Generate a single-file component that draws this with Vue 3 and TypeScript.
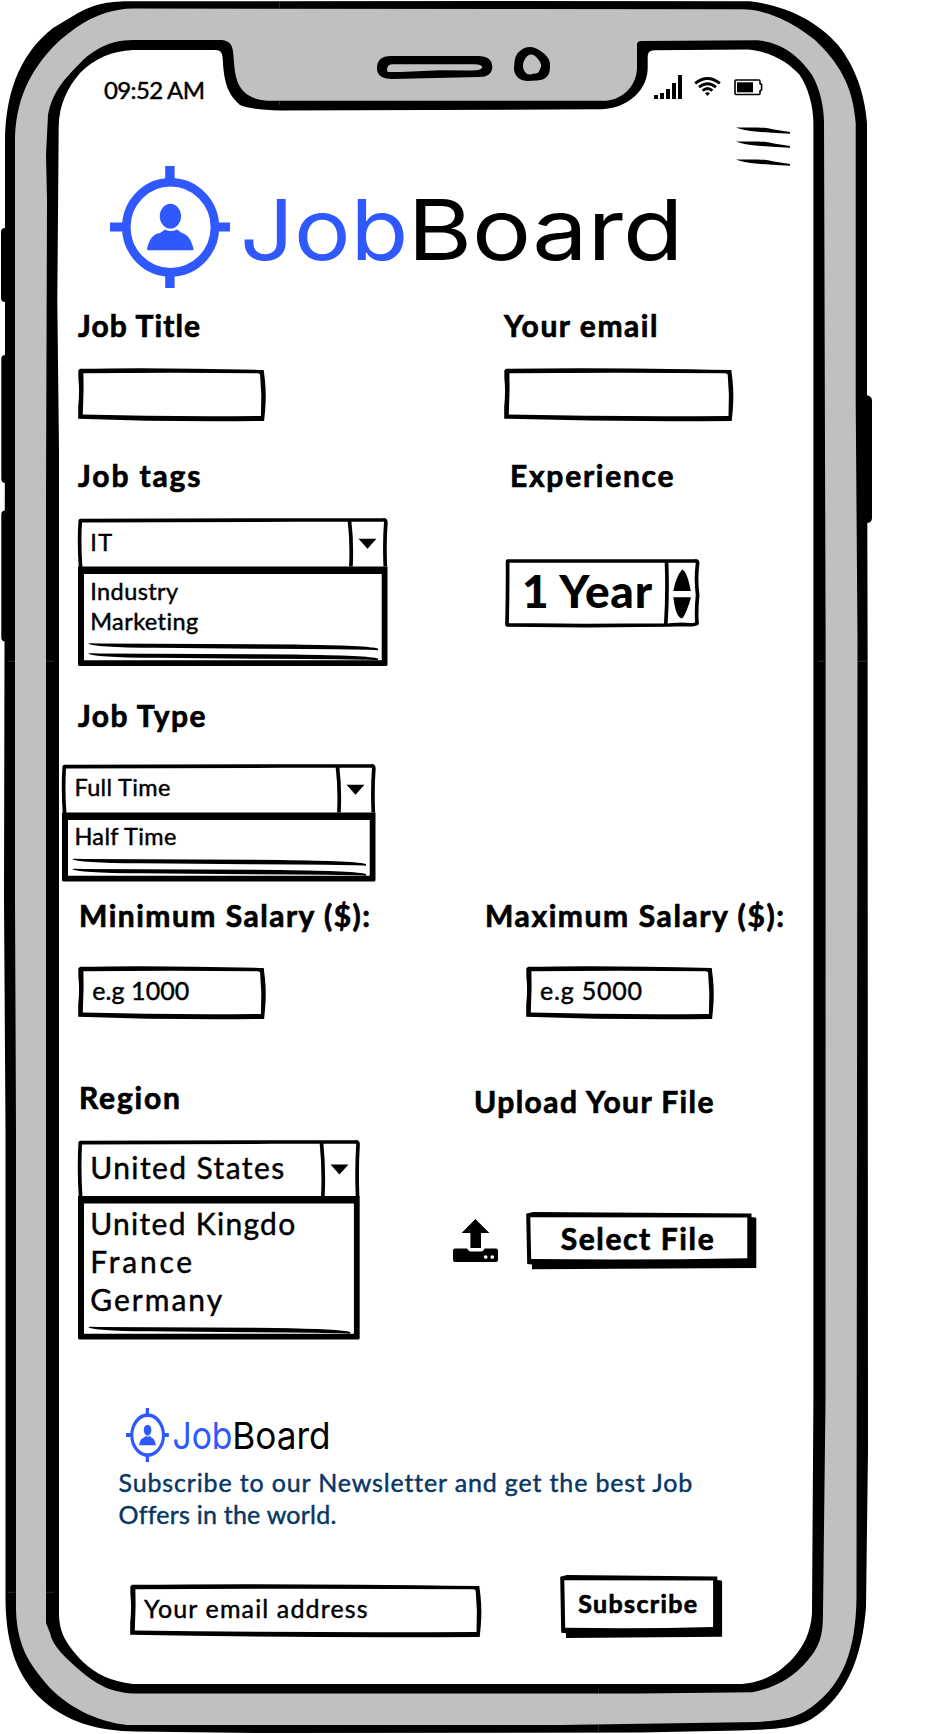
<script setup lang="ts">
import type { Directive } from 'vue'

type Line = [text: string, width: number]

interface SelectSpec {
  width: number
  height: number
  head: number
  divider: number
  value: Line
  options: Line[]
  rules: number[]
}

interface LeftItem {
  id: string
  label: Line
  select?: SelectSpec
  entry?: Line
}

// Tracks a line of text out (or in) so that it spans the given width.
const vSpan: Directive<HTMLElement, number> = {
  mounted(el, { value }) {
    const count = (el.textContent ?? '').length
    const natural = el.getBoundingClientRect().width
    if (count > 1) el.style.letterSpacing = `${((value - natural) / (count - 1)).toFixed(3)}px`
  },
}

const leftItems: LeftItem[] = [
  { id: 'title', label: ['Job Title', 122] },
  {
    id: 'tags',
    label: ['Job tags', 122.5],
    select: {
      width: 309.5, height: 148, head: 48.5, divider: 271.5,
      value: ['IT', 22], options: [['Industry', 88], ['Marketing', 108.5]], rules: [126, 136],
    },
  },
  {
    id: 'type',
    label: ['Job Type', 127.5],
    select: {
      width: 313.5, height: 117.5, head: 48.5, divider: 275.5,
      value: ['Full Time', 96], options: [['Half Time', 102]], rules: [95.5, 105.5],
    },
  },
  { id: 'minimum', label: ['Minimum Salary ($):', 291], entry: ['e.g 1000', 97] },
  {
    id: 'region',
    label: ['Region', 101],
    select: {
      width: 281.7, height: 199.5, head: 56, divider: 243.5,
      value: ['United States', 194],
      options: [['United Kingdo', 205], ['France', 102], ['Germany', 132]], rules: [187.5],
    },
  },
]

function inputFrame(w: number, h: number): string {
  return `M2 .8Q${w * 0.4} -1 ${w - 2} 2L${w - 0.8} ${h * 0.22}Q${w + 0.8} ${h * 0.5} ${w - 0.6} ${h * 0.8}L${w - 1.6} ${h - 0.4}`
    + `Q${w * 0.5} ${h + 0.8} .2 ${h - 2.6}L.2 ${h * 0.72}Q1.8 ${h * 0.45} .4 ${h * 0.2}L.3 2.4Z`
    + `M5.4 5.2L5.6 ${h * 0.4}L4.8 ${h - 6.8}Q${w * 0.5} ${h - 4.4} ${w - 4.8} ${h - 5.4}L${w - 4.4} ${h * 0.5}L${w - 5.6} 6.4L${w - 7.4} 5.2Q${w * 0.5} 4.1 5.4 5.2Z`
}

function buttonFrame(w: number, h: number): string {
  return `M.2 1.7L7 0L${w - 5} 1.5V5L${w - 0.2} 5.7V${h - 1.2}L6 ${h}V${h - 4.8}L1.2 ${h - 5.2}Z`
    + `M4.3 5.2L5.2 ${h - 10.2}Q${w * 0.5} ${h - 9} ${w - 9.2} ${h - 11}V5.6Z`
}

function selectHead({ width: w, head: h, divider: d }: SelectSpec): string {
  return `M2.6 ${h + 1}Q.8 ${h * 0.5} 2.3 2.6L${d * 0.8} 2L${w - 4} 1.8Q${w - 1.4} 1.6 ${w - 1.7} 5Q${w - 3.2} ${h * 0.5} ${w - 2.2} ${h}`
    + `M${d} 3Q${d + 2.6} ${h * 0.5} ${d + 1.4} ${h}`
}

function selectList({ width: w, height: h, head: t }: SelectSpec): string {
  return `M0 ${t}H${w}V${h - 1}L${w - 1} ${h}H1L0 ${h - 1}ZM6 ${t + 7.6}V${h - 5.8}H${w - 5.8}V${t + 7.6}Z`
}

function caret({ divider: d, head: h }: SelectSpec): string {
  return `M${d + 9} ${h / 2 - 3.4}h18l-9 9.8z`
}

function rule(w: number, y: number): string {
  return `M10 ${y - 0.6}Q12 ${y - 0.8} 22 ${y - 0.5}L${w * 0.7} ${y + 0.4}Q${w - 18} ${y + 1.5} ${w - 9.5} ${y + 4.4}V${y + 6.2}Q${w - 34} ${y + 5} ${w * 0.6} ${y + 4.8}L${w * 0.25} ${y + 3.8}Q15 ${y + 3.2} 10 ${y - 0.6}Z`
}
</script>

<template>
  <main class="page">
    <svg class="phone" width="950" height="1734" viewBox="0 0 950 1734" aria-hidden="true">
      <rect x="1" y="228" width="12" height="74" rx="4" />
      <rect x="1.3" y="355" width="12" height="128" rx="4" />
      <rect x="1.3" y="510.5" width="12" height="131" rx="4" />
      <rect x="858" y="395.6" width="14" height="127.5" rx="5" />
      <path d="M125 1.3C102 2 92 6 78 13L53 28C25 50 5 85 5 143V400L4 900L5.5 1130V1600C6 1650 20 1677 38 1696C65 1723 100 1731 135 1731.5L260 1733L640 1732.5L740 1730.5C780 1729 797 1728 813 1718C845 1697 862 1660 866 1607L868 1450L867.6 640L867 400V123C864 85 850 60 838 45C818 22 788 6 750 1.3L500 1Z" />
      <path class="metal" d="M133 8.6C95 9 70 32 57 43C30 70 15 100 15 143V400L15 900L16 1130V1610C17 1650 33 1668 50 1688C72 1710 100 1722 127 1725L560 1725L758 1722C784 1720 797 1718 813 1706C842 1684 856 1652 856.5 1597L857.5 640L855.7 400V123C853 85 838 62 815 40C790 20 765 9.5 742 9.3Z" />
      <path d="M133 40H222C230 41 233 45 233.5 56C235 75 235 98 267 100.7H606C625 99 637 84 637 67V44Q637.5 41 641 41L758 40.2C785 43 802 60 812 75C820 88 824 108 824 123L825.6 640L825.5 1400L823 1613C823 1637 819 1647 808 1660C794 1677 775 1688 752 1692.3L640 1693.5H133C110 1692 98 1685 83 1673C65 1658 52 1645 50 1633L46 1623V500L47 200L46 155L48 115C53 90 64 80 83 60C95 49 110 42 124 40.6Z" />
      <path class="glass" d="M133 50H215C221 50 222.6 53 222.8 60C224 85 229 95 240 105Q252 110 280 110.5L602 109.3C628 108 647.7 90 647.7 68V56Q648 50.6 654 50.3L748 49.6C775 52 790 65 799 74C809 88 813.4 108 813.4 123V1400L812 1613C811 1632 803 1647 794 1657C778 1675 762 1682 742 1684H133C110 1681 96 1674 83 1662C67 1645 59 1634 59 1613V450L57.3 300L58.7 127C59 104 68 87 80 73C95 58 112 51 133 50Z" />
      <path d="M391 56H478Q492 56 492.3 67Q492 77 479 77L392 79Q377 79 377 68Q377 56 391 56Z" />
      <path class="metal" d="M392 64.3H474Q482 64.5 482.3 67.3Q481 70.5 472 70.5L440 70.2L400 72H388.5Q387 72 387 70Q387 64.5 392 64.3Z" />
      <path d="M530 47Q535 47 542 52Q551 58 550 67Q550 80 537 80.4L527 81Q515 80 514 69Q514 54 520 51Q524 47 530 47Z" />
      <path class="metal" d="M530 54.6Q534 54 538 59Q543 65 540 69Q539 74 534 73.6Q528 76 525 72Q522 68 523.5 62Q526 56 530 54.6Z" />
      <path class="seam" d="M8 661.3H15M46 661.3H54M818 661.3H826M858 661.3H866M8 1592.3H15M46 1592.3H54M279.5 1V8M279.5 101V105M598.5 1689V1693M598.5 1725V1733" />
    </svg>

    <div class="screen">
      <header class="status">
        <span v-span="101" class="copy time">09:52 AM</span>
        <div class="indicators">
          <svg width="28" height="24" viewBox="0 0 28 24"><path d="M0 20h4v4H0zM6 18h4v6H6zM12 14h4v10h-4zM18 8h4v16h-4zM24 0h4v24h-4z" /></svg>
          <svg width="27" height="19" viewBox="0 0 27 19">
            <g class="waves"><path d="M1.2 6.4Q13.5 -3.6 25.8 6.4" /><path d="M5 10.2Q13.5 3.2 22 10.2" /><path d="M8.7 13.6Q13.5 9.4 18.3 13.6" /></g>
            <path d="M11 16.2Q13.5 14.4 16 16.2L13.5 19Z" />
          </svg>
          <svg width="29" height="17" viewBox="0 0 29 17">
            <path class="cell" d="M2 1H25Q26 1 26 2.5V4.5L27.6 5.5V10.8L26 12V14.5Q26 15.5 25 15.5H2Q1 15.5 1 14.5V2Q1 1 2 1Z" /><rect x="3" y="3.3" width="16" height="10" />
          </svg>
        </div>
      </header>

      <button class="menu" aria-label="Menu">
        <svg width="54" height="40" viewBox="0 0 54 40">
          <path v-for="y in [0, 14, 32]" :key="y" :transform="`translate(0 ${y})`" d="M0 .6L22 .4Q30 .6 38 2.4L54 5V6.8L40 6L22 4.8Q6 3.4 0 .6Z" />
        </svg>
      </button>

      <svg class="logo" width="566" height="122" viewBox="0 0 566 122" role="img" aria-label="JobBoard">
        <defs>
          <g id="brand">
            <g class="blue">
              <path d="M55.2 0h9.4v16h-9.4zM55.2 106h9.4v16h-9.4zM0 56.5h16v9H0zM104 56.5h16v9h-16z" />
              <ellipse class="ring" cx="60.6" cy="61.3" rx="44.3" ry="45" />
              <ellipse cx="60.4" cy="50.2" rx="10.6" ry="12.4" />
              <path d="M37 83.5C39 73 43 68 50 67L55 63.4Q60.5 66.5 67 63.4L72 67C78 69 81 73 83.7 83.5Q83.5 84.3 82 84.3H39Q37 84.3 37 83.5Z" />
              <text x="130" y="93.7" textLength="168.5" lengthAdjust="spacingAndGlyphs">Job</text>
            </g>
            <text x="297.5" y="93.7" textLength="276" lengthAdjust="spacingAndGlyphs">Board</text>
          </g>
        </defs>
        <use href="#brand" />
      </svg>

      <div class="form">
        <div class="column left">
          <div v-for="item in leftItems" :key="item.id" class="item" :class="item.id">
            <label><span v-span="item.label[1]" class="heading">{{ item.label[0] }}</span></label>
            <div v-if="item.select" class="select">
              <svg :width="item.select.width" :height="item.select.height">
                <path class="pen" :d="selectHead(item.select)" />
                <path fill-rule="evenodd" :d="selectList(item.select)" />
                <path :d="caret(item.select)" />
                <path v-for="y in item.select.rules" :key="y" :d="rule(item.select.width, y)" />
              </svg>
              <div class="value"><span v-span="item.select.value[1]" class="copy">{{ item.select.value[0] }}</span></div>
              <div v-for="o in item.select.options" :key="o[0]" class="option"><span v-span="o[1]" class="copy">{{ o[0] }}</span></div>
            </div>
            <div v-else class="field">
              <svg width="188" height="54"><path fill-rule="evenodd" :d="inputFrame(187.7, 53.3)" /></svg>
              <span v-if="item.entry" v-span="item.entry[1]" class="copy entry">{{ item.entry[0] }}</span>
            </div>
          </div>
        </div>

        <div class="column right">
          <label class="email-label"><span v-span="153.5" class="heading">Your email</span></label>
          <div class="field wide"><svg width="229" height="54"><path fill-rule="evenodd" :d="inputFrame(229.3, 53.3)" /></svg></div>

          <label class="experience-label"><span v-span="163.5" class="heading">Experience</span></label>
          <div class="spinner">
            <svg width="195" height="69">
              <path class="pen" d="M2.6 2H190Q192.6 1.6 192.6 4Q190.5 20 192.6 36Q191 52 192 64.5Q190 66.5 176 65.4L164 66L80 66.6L2 65.8Q2.8 33 2.6 2ZM161.5 2Q162.8 34 160.8 65" />
              <path d="M168.3 32Q171 18 177 10.6Q182 12 185.8 32ZM168.3 38.2H186Q182 53 177.5 59.3Q171 60 168.3 38.2Z" />
            </svg>
            <span v-span="130" class="years">1 Year</span>
          </div>

          <label class="max-label"><span v-span="299" class="heading">Maximum Salary ($):</span></label>
          <div class="field shifted">
            <svg width="188" height="54"><path fill-rule="evenodd" :d="inputFrame(187.7, 53.3)" /></svg>
            <span v-span="102" class="copy entry">e.g 5000</span>
          </div>

          <label class="upload-label"><span v-span="239.5" class="heading">Upload Your File</span></label>
          <div class="upload">
            <svg width="45" height="44" viewBox="0 0 45 44">
              <path d="M22.4 0L36.4 14H28V29H17.4V14H8.6Z" />
              <path fill-rule="evenodd" d="M2 29.5H14Q15.5 32.5 18 32.5H28Q30.5 32.5 31.5 29.5H43Q45 29.5 45 31.5V41Q45 43 43 43H2Q0 43 0 41V31.5Q0 29.5 2 29.5ZM32.7 36.2a1.8 1.8 0 1 0 .01 0ZM39.3 36.2a1.8 1.8 0 1 0 .01 0Z" />
            </svg>
            <button class="action select-file">
              <svg width="231" height="58"><path fill-rule="evenodd" :d="buttonFrame(230.5, 57.3)" /></svg>
              <span v-span="153" class="heading">Select File</span>
            </button>
          </div>
        </div>
      </div>

      <footer class="newsletter">
        <svg class="footer-logo" width="202" height="54" viewBox="0 0 566 122" preserveAspectRatio="none" role="img" aria-label="JobBoard"><use href="#brand" /></svg>
        <p>
          <span v-span="573" class="copy">Subscribe to our Newsletter and get the best Job</span><br>
          <span v-span="217" class="copy">Offers in the world.</span>
        </p>
        <div class="subscribe">
          <div class="field address">
            <svg width="352" height="54"><path fill-rule="evenodd" :d="inputFrame(351.3, 53.3)" /></svg>
            <span v-span="223.5" class="copy entry">Your email address</span>
          </div>
          <button class="action join">
            <svg width="163" height="64"><path fill-rule="evenodd" :d="buttonFrame(162.3, 63)" /></svg>
            <span v-span="119" class="heading">Subscribe</span>
          </button>
        </div>
      </footer>
    </div>
  </main>
</template>

<style>
body {
  margin: 0;
  background: #fff;
}
</style>

<style scoped>
.page {
  position: relative;
  width: 950px;
  height: 1734px;
  overflow: hidden;
  background: #fff;
  color: #000;
  font-family: Lato, "Liberation Sans", sans-serif;
}
svg { display: block; overflow: visible; }
.phone { position: absolute; inset: 0; }
.metal { fill: #c0c0c0; }
.glass { fill: #fff; }
.seam { fill: none; stroke: #444; stroke-width: 0.6; }
.pen { fill: none; stroke: #000; stroke-width: 3.7; stroke-linejoin: round; }
.screen { position: relative; width: 814px; height: 1684px; box-sizing: border-box; padding-top: 74px; }

.copy { white-space: pre; -webkit-text-stroke: 0.45px currentColor; }
.heading { white-space: pre; font-weight: 700; -webkit-text-stroke: 0.7px currentColor; }

.status { display: flex; align-items: flex-start; height: 52px; padding-left: 104px; }
.time { width: max-content; margin-top: 1px; font-size: 24px; line-height: 30px; }
.indicators { display: flex; margin-left: auto; padding-right: 51px; }
.indicators svg:nth-child(1) { margin-top: 1px; }
.indicators svg:nth-child(2) { margin: 3px 13px 0 12px; }
.indicators svg:nth-child(3) { margin-top: 5px; }
.waves { fill: none; stroke: #000; stroke-width: 2.9; }
.cell { fill: none; stroke: #000; stroke-width: 1.6; }

.menu { display: block; height: 40px; margin: 0 24px 0 auto; padding: 0; border: 0; background: none; }
.menu svg { margin-top: 1px; }
.logo { margin-left: 110px; }
.blue { fill: #3058ff; }
.ring { fill: none; stroke: #3058ff; stroke-width: 8.6; }
#brand text { font-family: Inter, sans-serif; font-size: 84.5px; font-weight: 400; stroke: currentColor; stroke-width: 0; }

.form { display: flex; height: 1042px; margin-top: 18px; }
.column { box-sizing: border-box; }
.left { width: 452px; padding-left: 62px; }
.right { width: 362px; }
label { display: flex; height: 36px; margin-left: 16px; font-size: 30px; line-height: 36px; }

.field { position: relative; box-sizing: border-box; width: 188px; height: 53.5px; margin: 26px 0 0 16.3px; }
.field svg, .select svg, .spinner svg, .action svg { position: absolute; top: 0; left: 0; }
.entry { position: relative; display: inline-block; font-size: 25px; line-height: 30px; }

.select { position: relative; box-sizing: border-box; font-size: 23.5px; line-height: 30px; }
.value, .option { position: relative; display: flex; height: 30.2px; }
.value { margin-bottom: 19.2px; }

.title label, .email-label { position: relative; top: 0.6px; }
.tags { margin-top: 35.5px; }
.tags .select { height: 148px; margin: 25px 0 0 16.2px; padding: 8.6px 0 0 12px; }
.type { margin-top: 31px; }
.type .select { height: 117.5px; margin: 31px 0 0 0.4px; padding: 8px 0 0 12px; }
.minimum { margin-top: 15.5px; }
.minimum label { margin-left: 17px; }
.minimum .field { margin-top: 33px; padding: 9.4px 0 0 14px; }
.region { margin-top: 59px; }
.region label { margin-left: 17px; }
.region .select { height: 199.5px; margin: 25.6px 0 0 16.2px; padding: 7.6px 0 0 12px; font-size: 30px; line-height: 38px; }
.region .value, .region .option { height: 38px; }
.region .value { margin-bottom: 18.6px; }

.email-label { margin-left: 52px; }
.wide { width: 229px; margin-left: 52.3px; }
.experience-label { margin: 35.5px 0 0 58px; }
.spinner { position: relative; box-sizing: border-box; height: 68.5px; margin: 65.7px 0 0 53px; padding: 5px 0 0 17px; }
.years { position: relative; display: inline-block; font-size: 46px; font-weight: 900; line-height: 54px; white-space: pre; }
.max-label { margin: 269.8px 0 0 33px; }
.shifted { margin: 33px 0 0 74px; padding: 9.4px 0 0 14px; }
.upload-label { margin: 63.5px 0 0 22px; }
.upload { display: flex; align-items: flex-start; gap: 28px; margin-top: 93px; padding-left: 0.7px; }
.upload > svg { margin-top: 7.3px; }
.action { position: relative; display: flex; box-sizing: border-box; padding: 0; border: 0; background: none; color: #000; font-family: inherit; }
.action span { position: relative; }
.select-file { width: 231px; height: 58px; padding: 7px 0 0 35px; font-size: 30px; line-height: 38px; }

.newsletter { margin-top: 60px; }
.footer-logo { margin-left: 126px; }
p { height: 64px; margin: 4px 0 0 118.5px; color: #073763; font-size: 25px; line-height: 32px; }
.subscribe { display: flex; margin: 44.5px 0 0 130px; }
.address { width: 351px; margin: 9.5px 0 0; padding: 9px 0 0 14px; }
.join { width: 163px; height: 64px; margin-left: 78.7px; padding: 11px 0 0 18.5px; font-size: 25px; line-height: 34px; }
</style>
